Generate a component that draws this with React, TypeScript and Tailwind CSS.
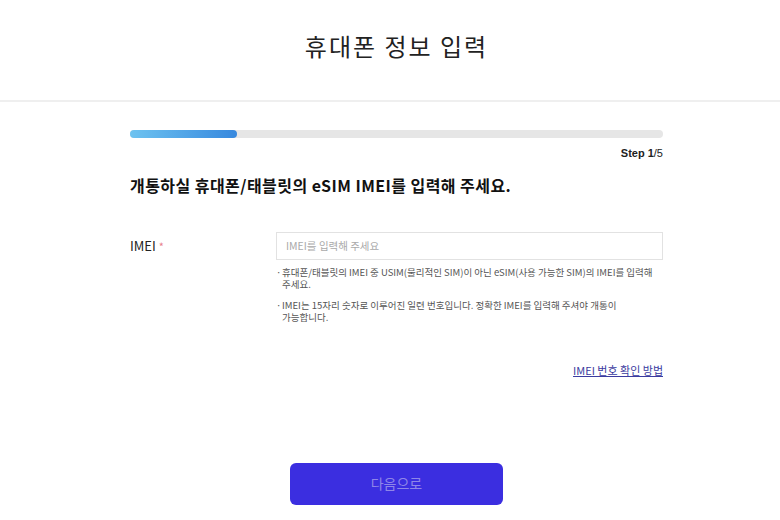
import React from 'react';

const notes = [
  ['휴대폰/태블릿의 IMEI 중 USIM(물리적인 SIM)이 아닌 eSIM(사용 가능한 SIM)의 IMEI를 입력해', '주세요.'],
  ['IMEI는 15자리 숫자로 이루어진 일련 번호입니다. 정확한 IMEI를 입력해 주셔야 개통이', '가능합니다.'],
];

const App: React.FC = () => {
  return (
    <div className="w-[780px] h-[520px] bg-white overflow-hidden font-['Noto_Sans_CJK_KR',sans-serif] text-[#222]">
      {/* header */}
      <header className="h-[102px] border-b-2 border-[#efefef]">
        <div className="ml-[130px] w-[533px] pt-[29px] text-center">
          <h1 className="text-[24px] leading-[34px] font-normal tracking-[2px] text-[#222]">휴대폰 정보 입력</h1>
        </div>
      </header>

      <main className="ml-[130px] w-[533px]">
        {/* progress */}
        <div className="mt-[28px] h-[8px] rounded-full bg-[#e6e6e6]">
          <div className="h-full w-[107px] rounded-full bg-gradient-to-r from-[#6ec3f0] to-[#3788de]" />
        </div>
        <div className="mt-[9px] text-right text-[11px] leading-[13px] font-['Liberation_Sans',sans-serif] text-[#222]">
          <span className="font-bold">Step 1</span>/5
        </div>

        <h2 className="mt-[14px] text-[16px] leading-[22px] font-bold tracking-[0.45px] text-[#111]">
          개통하실 휴대폰/태블릿의 eSIM IMEI를 입력해 주세요.
        </h2>

        {/* form row */}
        <div className="mt-[35px] flex">
          <div className="w-[146px] pt-[6px] text-[13px] leading-[18px] text-[#222]">
            IMEI <span className="text-[11px] text-[#e8808e]">*</span>
          </div>
          <div className="flex-1">
            <input
              className="w-full h-[28px] border border-[#e2e2e2] px-[9px] text-[10.5px] placeholder:text-[#aaa] outline-none"
              placeholder="IMEI를 입력해 주세요"
            />
            <ul className="mt-[6px] flex flex-col gap-[8px]">
              {notes.map((n, i) => (
                <li key={i} className="flex text-[9.5px] leading-[12.5px] text-[#555]">
                  <span className="w-[6px] shrink-0">·</span>
                  <span className="whitespace-nowrap">
                    {n[0]}
                    <br />
                    {n[1]}
                  </span>
                </li>
              ))}
            </ul>
          </div>
        </div>

        <div className="mt-[32px] text-right">
          <a href="#" className="text-[11px] leading-[14px] underline text-[#3b3ba0]">
            IMEI 번호 확인 방법
          </a>
        </div>

        <div className="mt-[83px] flex justify-center">
          <button className="w-[213px] h-[42px] rounded-[6px] bg-[#3b2ee0] text-[14px] text-[#8f86e8]">
            다음으로
          </button>
        </div>
      </main>
    </div>
  );
};

export default App;
